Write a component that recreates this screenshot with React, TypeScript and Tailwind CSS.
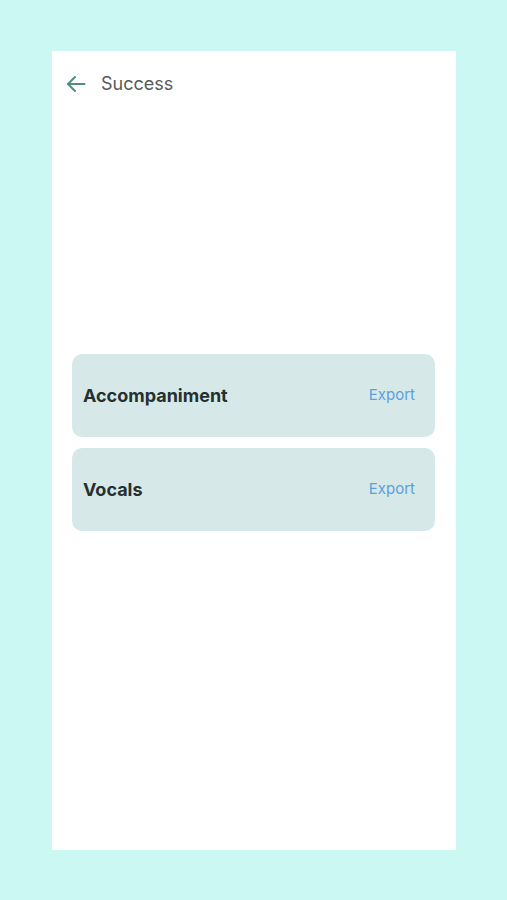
import React from "react";

function ArrowLeft() {
  return (
    <svg width="20" height="20" viewBox="0 0 20 20" fill="none" stroke="#4d8f80" strokeWidth="2" strokeLinecap="round" strokeLinejoin="round">
      <path d="M18.5 10H2" />
      <path d="M9 3l-7 7 7 7" />
    </svg>
  );
}

function Row({ title }: { title: string }) {
  return (
    <div className="flex h-[83px] items-center justify-between rounded-[10px] bg-[#d6e9e8] pl-[11px] pr-[20px]">
      <span className="text-[18px] font-bold text-[#26302f]">{title}</span>
      <span className="text-[15px] text-[#5c9fde]">Export</span>
    </div>
  );
}

export default function App() {
  return (
    <div className="min-h-[900px] w-full bg-[#cbf8f2] pt-[51px] pl-[52px]" style={{ fontFamily: "Inter, 'Noto Sans', sans-serif" }}>
      <div className="flex h-[799px] w-[404px] flex-col bg-white">
        <div className="flex h-[64px] items-center gap-[15px] pl-[14px] pt-[1px]">
          <ArrowLeft />
          <span className="text-[18px] text-[#555a5a]">Success</span>
        </div>
        <div className="mt-[239px] flex flex-col gap-[11px] pl-[20px] pr-[21px]">
          <Row title="Accompaniment" />
          <Row title="Vocals" />
        </div>
      </div>
    </div>
  );
}
